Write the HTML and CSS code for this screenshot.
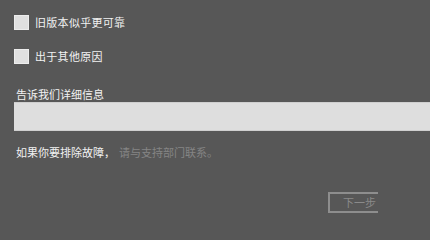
FILE: index.html
```html
<!DOCTYPE html>
<html lang="zh-CN">
<head>
<meta charset="utf-8">
<title>反馈</title>
<link rel="stylesheet" href="styles.css">
</head>
<body>
<div class="page">
  <label class="check"><span class="box"></span><span class="check-text">旧版本似乎更可靠</span></label>
  <label class="check second"><span class="box"></span><span class="check-text">出于其他原因</span></label>
  <div class="field-label">告诉我们详细信息</div>
  <div class="input"></div>
  <p class="hint">如果你要排除故障，<span class="muted">请与支持部门联系。</span></p>
  <div class="actions"><button class="next">下一步</button></div>
</div>
</body>
</html>
```
FILE: styles.css
```css
html, body {
  margin: 0;
  padding: 0;
  background: #575757;
}
body {
  width: 430px;
  height: 220px;
  overflow: hidden;
  font-family: "Noto Sans CJK SC", "Noto Sans", sans-serif;
  font-size: 11px;
  color: #f2f2f2;
}
.page {
  display: flex;
  flex-direction: column;
  padding: 15px 0 0 14px;
}
.check {
  display: flex;
  align-items: center;
  gap: 6px;
  height: 15px;
}
.check.second {
  margin-top: 19px;
}
.box {
  width: 13px;
  height: 13px;
  background: #e0e0e0;
  border: 1px solid #ededed;
  flex: none;
}
.check-text {
  line-height: 15px;
  letter-spacing: 0.3px;
}
.field-label {
  margin-top: 23px;
  padding-left: 2px;
  line-height: 14px;
  letter-spacing: 0;
}
.input {
  margin-top: 1px;
  height: 27px;
  background: #dedede;
  border-top: 1px solid #cfcfcf;
  border-bottom: 1px solid #cfcfcf;
}
.hint {
  margin: 14px 0 0 2px;
  line-height: 14px;
}
.muted {
  color: #858585;
  margin-left: 4px;
}
.actions {
  display: flex;
  justify-content: flex-end;
  padding-right: 52px;
  margin-top: 33px;
}
.next {
  width: 50px;
  height: 21px;
  background: transparent;
  border: 2px solid #8e8e8e;
  border-right: none;
  color: #8a8a8a;
  font-family: inherit;
  font-size: 11px;
  text-align: right;
  padding: 0 2px 0 0;
  line-height: 17px;
}
```
